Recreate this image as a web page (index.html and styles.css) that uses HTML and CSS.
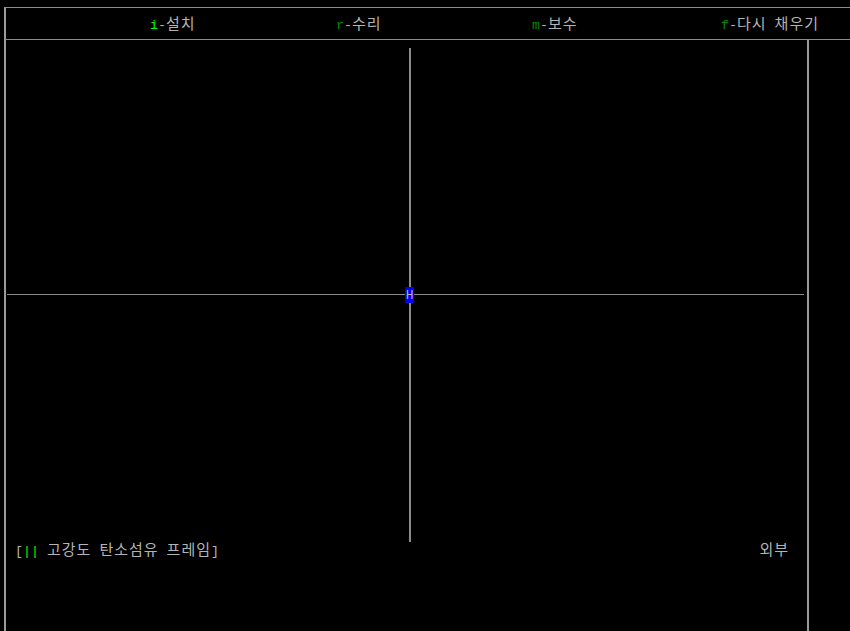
FILE: index.html
```html
<!DOCTYPE html>
<html lang="ko">
<head>
<meta charset="utf-8">
<title>차량 건설</title>
<link rel="stylesheet" href="styles.css">
</head>
<body>
<div class="screen">
  <div class="frame">
    <div class="tabs">
      <div class="tab"><span class="lat key-on">i</span><span class="lat">-</span><span class="ko">설치</span></div>
      <div class="tab"><span class="lat key">r</span><span class="lat">-</span><span class="ko">수리</span></div>
      <div class="tab"><span class="lat key">m</span><span class="lat">-</span><span class="ko">보수</span></div>
      <div class="tab"><span class="lat key">f</span><span class="lat">-</span><span class="ko">다시</span><span class="lat"> </span><span class="ko">채우기</span></div>
    </div>
    <div class="body">
      <div class="map">
        <div class="viewport">
          <div class="line-v"></div>
          <div class="line-h"></div>
          <div class="tile">H</div>
        </div>
        <div class="status">
          <div class="part"><span class="lat">[</span><span class="lat key-on">||</span><span class="lat"> </span><span class="ko">고강도</span><span class="lat"> </span><span class="ko">탄소섬유</span><span class="lat"> </span><span class="ko">프레임</span><span class="lat">]</span></div>
          <div class="loc"><span class="ko">외부</span></div>
        </div>
      </div>
      <div class="side"></div>
    </div>
  </div>
</div>
</body>
</html>
```
FILE: styles.css
```css
html, body {
  margin: 0;
  padding: 0;
  background: #000;
}
body {
  width: 850px;
  height: 631px;
  overflow: hidden;
  color: #b4b4b4;
  font-family: "Liberation Mono", "Noto Sans CJK KR", monospace;
  font-size: 13.33px;
}
.screen {
  box-sizing: border-box;
  height: 631px;
  padding: 7px 0 0 4px;
}
.frame {
  box-sizing: border-box;
  height: 100%;
  border-top: 1px solid #8a8a8a;
  border-left: 2px solid #9a9a9a;
  display: flex;
  flex-direction: column;
}
.tabs {
  box-sizing: border-box;
  height: 32px;
  border-bottom: 1px solid #8a8a8a;
  display: grid;
  grid-template-columns: 186px 196px 189px auto;
  align-items: center;
  padding-left: 144px;
  padding-top: 1px;
}
.tab {
  white-space: nowrap;
  line-height: 16px;
}
.lat {
  font-family: "Liberation Mono", monospace;
  font-size: 13.33px;
  letter-spacing: 0;
  white-space: pre;
}
.ko {
  font-family: "Noto Sans CJK KR", sans-serif;
  font-size: 15px;
  letter-spacing: 1px;
}
.key-on {
  color: #00ff00;
}
.key {
  color: #008a00;
}
.body {
  flex: 1;
  display: flex;
}
.map {
  width: 801px;
  display: flex;
  flex-direction: column;
}
.viewport {
  position: relative;
  height: 502px;
}
.line-v {
  position: absolute;
  left: 403px;
  top: 8px;
  bottom: 0;
  width: 2px;
  background: #8a8a8a;
}
.line-h {
  position: absolute;
  left: 1px;
  top: 254px;
  width: 797px;
  height: 1px;
  background: #8a8a8a;
}
.tile {
  position: absolute;
  left: 399px;
  top: 247px;
  width: 9px;
  height: 16px;
  background: #0000f0;
  color: #b4b4b4;
  font-family: "DejaVu Sans Mono", monospace;
  font-size: 12px;
  line-height: 16px;
  text-align: center;
}
.status {
  display: flex;
  justify-content: space-between;
  align-items: center;
  height: 16px;
  line-height: 16px;
  padding: 0 18px 0 9px;
  white-space: nowrap;
}
.side {
  flex: 1;
  border-left: 2px solid #9a9a9a;
}
```
